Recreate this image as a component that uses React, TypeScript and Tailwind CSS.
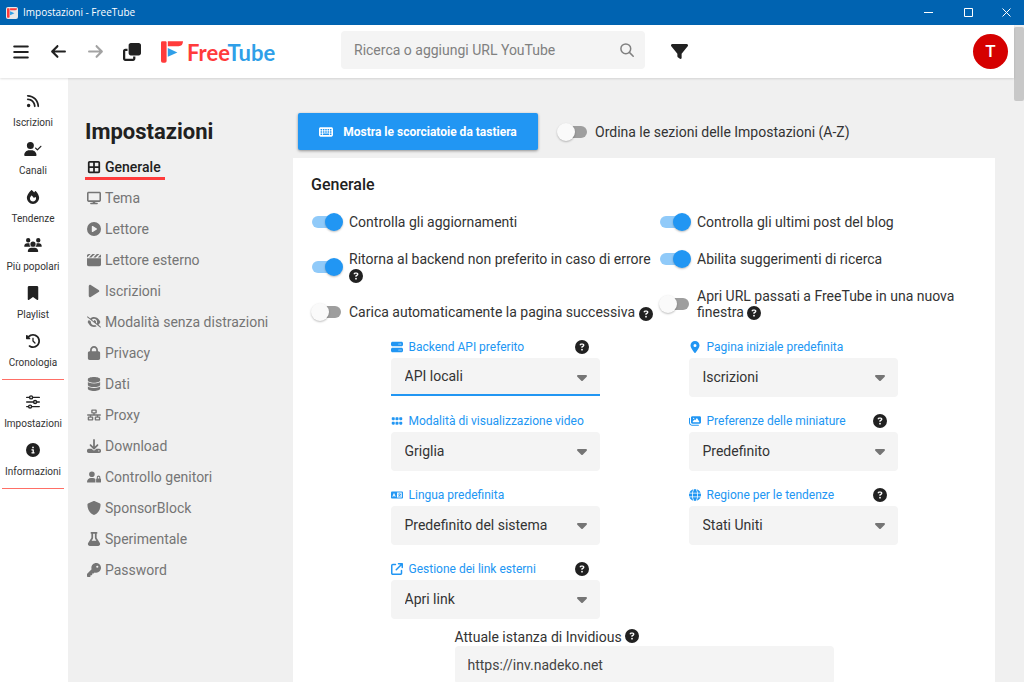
import { useState } from 'react';
import type { ReactNode } from 'react';
import type { IconType } from 'react-icons';
import {
  FaArrowLeft,
  FaArrowRight,
  FaArrowUpRightFromSquare,
  FaBookmark,
  FaBorderAll,
  FaCaretDown,
  FaCircleInfo,
  FaCirclePlay,
  FaCircleQuestion,
  FaClapperboard,
  FaClockRotateLeft,
  FaClone,
  FaDatabase,
  FaDisplay,
  FaDownload,
  FaEyeSlash,
  FaFilter,
  FaFire,
  FaFlask,
  FaGlobe,
  FaGrip,
  FaImages,
  FaKey,
  FaKeyboard,
  FaLanguage,
  FaLocationDot,
  FaLock,
  FaNetworkWired,
  FaPlay,
  FaRss,
  FaServer,
  FaShield,
  FaUserCheck,
  FaUserLock,
  FaUsers,
} from 'react-icons/fa6';

type IconProps = { className?: string };
type NavEntry = { label: string; icon: IconType | ((props: IconProps) => ReactNode) };

function SlidersIcon({ className }: IconProps) {
  return (
    <svg viewBox="0 0 14 14" className={className} fill="none" stroke="currentColor" strokeWidth="1.4" strokeLinecap="round">
      <path d="M.7 2.4H3.4M6.8 2.4H13.3M.7 7H7.4M10.8 7H13.3M.7 11.6H2.4M5.8 11.6H13.3" />
      <circle cx="5.1" cy="2.4" r="1.5" />
      <circle cx="9.1" cy="7" r="1.5" />
      <circle cx="4.1" cy="11.6" r="1.5" />
    </svg>
  );
}

const mainNav: NavEntry[] = [
  { label: 'Iscrizioni', icon: FaRss },
  { label: 'Canali', icon: FaUserCheck },
  { label: 'Tendenze', icon: FaFire },
  { label: 'Più popolari', icon: FaUsers },
  { label: 'Playlist', icon: FaBookmark },
  { label: 'Cronologia', icon: FaClockRotateLeft },
];

const appNav: NavEntry[] = [
  { label: 'Impostazioni', icon: SlidersIcon },
  { label: 'Informazioni', icon: FaCircleInfo },
];

const sections: NavEntry[] = [
  { label: 'Generale', icon: FaBorderAll },
  { label: 'Tema', icon: FaDisplay },
  { label: 'Lettore', icon: FaCirclePlay },
  { label: 'Lettore esterno', icon: FaClapperboard },
  { label: 'Iscrizioni', icon: FaPlay },
  { label: 'Modalità senza distrazioni', icon: FaEyeSlash },
  { label: 'Privacy', icon: FaLock },
  { label: 'Dati', icon: FaDatabase },
  { label: 'Proxy', icon: FaNetworkWired },
  { label: 'Download', icon: FaDownload },
  { label: 'Controllo genitori', icon: FaUserLock },
  { label: 'SponsorBlock', icon: FaShield },
  { label: 'Sperimentale', icon: FaFlask },
  { label: 'Password', icon: FaKey },
];

function LogoMark({ className }: IconProps) {
  return (
    <svg viewBox="0 0 22 22" className={className} aria-hidden="true">
      <path d="M0 1.5Q0 .3 1.2 .3H4.4Q5.6 .3 5.6 1.5V20Q5.6 21.7 3.8 21.7H1.8Q0 21.7 0 20Z" fill="#ff3b3b" />
      <path d="M6.8 .3H22Q22 5.2 17.6 5.2H6.8Z" fill="#ff3b3b" />
      <path d="M6.8 7L16.4 11.4L6.8 15.8Z" fill="#2f9fe8" />
    </svg>
  );
}

function TitleBar() {
  return (
    <div className="flex h-[25px] shrink-0 items-center bg-[#0063b1] text-white">
      <span className="ml-1.5 flex size-3 items-center justify-center rounded-xs bg-[#e8e8e8]">
        <LogoMark className="size-2.5" />
      </span>
      <span className="ml-[5px] font-['Open_Sans',sans-serif] text-[10px]">Impostazioni - FreeTube</span>
      <div className="ml-auto flex h-full">
        <button type="button" aria-label="Riduci a icona" className="flex w-10 items-center justify-center">
          <svg viewBox="0 0 9 9" className="size-[9px]"><path d="M0 4.5H9" stroke="currentColor" /></svg>
        </button>
        <button type="button" aria-label="Ingrandisci" className="flex w-10 items-center justify-center">
          <svg viewBox="0 0 9 9" className="size-[9px]"><path d="M.5 .5H8.5V8.5H.5Z" fill="none" stroke="currentColor" /></svg>
        </button>
        <button type="button" aria-label="Chiudi" className="flex w-9 items-center justify-center">
          <svg viewBox="0 0 9 9" className="size-[9px]"><path d="M.5 .5L8.5 8.5M8.5 .5L.5 8.5" stroke="currentColor" /></svg>
        </button>
      </div>
    </div>
  );
}

function TopBar() {
  return (
    <header className="z-10 flex h-[53px] shrink-0 items-center bg-white shadow-[0_1px_2px_rgba(0,0,0,0.12)]">
      <div className="flex w-[341px] shrink-0 items-center pl-3">
        <button type="button" aria-label="Menu" className="flex w-[18px] justify-center">
          <svg viewBox="0 0 16 14" className="h-3.5 w-4" stroke="currentColor" strokeWidth="2" strokeLinecap="round">
            <path d="M1.2 1.5H14.8M1.2 7H14.8M1.2 12.5H14.8" />
          </svg>
        </button>
        <button type="button" aria-label="Indietro" className="ml-[19px] flex w-[18px] justify-center"><FaArrowLeft className="size-[17px]" /></button>
        <button type="button" aria-label="Avanti" className="ml-[19px] flex w-[18px] justify-center text-[#a3a3a3]"><FaArrowRight className="size-[17px]" /></button>
        <button type="button" aria-label="Nuova finestra" className="ml-[19px] flex w-[18px] justify-center"><FaClone className="size-[18px]" /></button>
        <a href="#home" className="ml-5 flex items-center">
          <LogoMark className="size-[22px]" />
          <span className="ml-1 pt-0.5 font-['Lato',sans-serif] text-[22px] leading-6 font-bold text-[#ff3b3b]">
            Free<span className="text-[#2f9fe8]">Tube</span>
          </span>
        </a>
      </div>
      <form className="mb-[3px] flex h-[38px] w-[304px] items-center rounded bg-[#f4f4f4]" role="search">
        <input
          type="text"
          aria-label="Ricerca"
          placeholder="Ricerca o aggiungi URL YouTube"
          className="min-w-0 flex-1 bg-transparent pl-[13px] text-[14px] outline-none placeholder:text-[#808080]"
        />
        <button type="button" aria-label="Cerca" className="mr-[11px] text-[#808080]">
          <svg viewBox="0 0 14 14" className="size-3.5" fill="none" stroke="currentColor" strokeWidth="1.5" strokeLinecap="round">
            <circle cx="5.8" cy="5.8" r="4.9" />
            <path d="M9.4 9.4L13.2 13.2" />
          </svg>
        </button>
      </form>
      <button type="button" aria-label="Filtri" className="ml-[26px]"><FaFilter className="size-[17px]" /></button>
      <button type="button" className="mr-1.5 ml-auto flex size-[35px] items-center justify-center rounded-full bg-[#d50000] text-[17px] font-medium text-white">
        T
      </button>
    </header>
  );
}

function NavLink({ label, icon: Icon }: NavEntry) {
  return (
    <a href={`#${label}`} className="flex h-12 flex-col items-center justify-center gap-[9px]">
      <Icon className="h-3.5 w-[18px]" />
      <span className="text-[10px] leading-3 whitespace-nowrap text-[#333333]">{label}</span>
    </a>
  );
}

function SideNav() {
  return (
    <nav className="w-[68px] shrink-0 bg-white pt-[9px] pr-0.5">
      {mainNav.map((item) => <NavLink key={item.label} {...item} />)}
      <hr className="mx-0.5 mt-1 mb-2 h-px border-0 bg-[#ff6f66]" />
      {appNav.map((item) => <NavLink key={item.label} {...item} />)}
      <hr className="mx-0.5 mt-1 h-px border-0 bg-[#ff6f66]" />
    </nav>
  );
}

function SectionMenu() {
  const [active, setActive] = useState('Generale');

  return (
    <aside className="w-[225px] shrink-0 pt-10 pl-[17px]">
      <h1 className="text-[22px] leading-7 font-bold">Impostazioni</h1>
      <ul className="mt-[11px]">
        {sections.map(({ label, icon: Icon }) => (
          <li key={label} className="flex h-[31px] items-start">
            <a
              href={`#${label}`}
              onClick={() => setActive(label)}
              className={
                label === active
                  ? 'flex h-[23px] items-center gap-1 border-b-3 border-[#ff3b3b] pr-1 pl-0.5 text-[14px] font-medium'
                  : 'flex h-[23px] items-center gap-1 border-b-3 border-transparent pr-1 pl-0.5 text-[14px] text-[#757575]'
              }
            >
              <Icon className="size-3.5" />
              {label}
            </a>
          </li>
        ))}
      </ul>
    </aside>
  );
}

function Help() {
  return (
    <button type="button" aria-label="Aiuto" className="inline-block align-middle text-[#212121]">
      <FaCircleQuestion className="size-3.5" />
    </button>
  );
}

type ToggleProps = { children: ReactNode; on?: boolean; help?: boolean };

function Toggle({ children, on = false, help = false }: ToggleProps) {
  return (
    <div className="flex items-center py-2.5">
      <label className="flex items-center">
        <input type="checkbox" defaultChecked={on} className="peer sr-only" />
        <span className="relative mr-2 h-3 w-[29px] shrink-0 rounded-full bg-[#9e9e9e] before:absolute before:-top-[3px] before:-left-px before:size-[18px] before:rounded-full before:bg-[#fafafa] before:shadow-[0_1px_2px_rgba(0,0,0,0.25)] peer-checked:bg-[#90caf9] peer-checked:before:left-[13px] peer-checked:before:bg-[#2196f3]" />
        <span className="pt-px text-[14px] leading-4 text-[#333333]">
          {children}
          {help && <> <Help /></>}
        </span>
      </label>
    </div>
  );
}

type SelectFieldProps = {
  id: string;
  label: string;
  icon: IconType;
  options: string[];
  help?: boolean;
  focused?: boolean;
};

function SelectField({ id, label, icon: Icon, options, help = false, focused = false }: SelectFieldProps) {
  return (
    <div>
      <div className="flex h-[19px] items-center pb-0.5">
        <label htmlFor={id} className="flex items-center gap-1.5 text-[12px] leading-4 text-[#2196f3]">
          <Icon className="size-3" />
          {label}
        </label>
        {help && <span className="mr-[11px] ml-auto flex"><Help /></span>}
      </div>
      <div className="relative h-[39px]">
        <select
          id={id}
          className={
            focused
              ? 'h-[38px] w-full appearance-none rounded-t border-b-2 border-[#2196f3] bg-[#f4f4f4] pt-0.5 pr-8 pl-3.5 text-[14px] text-[#333333] outline-none'
              : 'h-[39px] w-full appearance-none rounded bg-[#f4f4f4] pr-8 pl-3.5 text-[14px] text-[#333333] outline-none'
          }
        >
          {options.map((option) => <option key={option}>{option}</option>)}
        </select>
        <FaCaretDown className="pointer-events-none absolute top-[11px] right-2.5 size-4 text-[#757575]" />
      </div>
    </div>
  );
}

function GeneralSettings() {
  return (
    <section className="mr-[19px] flex-1 bg-white px-[18px] pt-[18px]">
      <h2 className="text-[16px] leading-[18px] font-medium">Generale</h2>
      <div className="mt-[9px] grid grid-cols-[348px_1fr]">
        <div className="pl-px">
          <Toggle on>Controlla gli aggiornamenti</Toggle>
          <Toggle on help>Ritorna al backend non preferito in caso di errore</Toggle>
          <Toggle help>Carica automaticamente la pagina successiva</Toggle>
        </div>
        <div className="pr-4 pl-px">
          <Toggle on>Controlla gli ultimi post del blog</Toggle>
          <Toggle on>Abilita suggerimenti di ricerca</Toggle>
          <Toggle help>Apri URL passati a FreeTube in una nuova finestra</Toggle>
        </div>
      </div>
      <div className="mt-2 grid grid-cols-[209px_209px] justify-center gap-x-[89px] gap-y-4">
        <SelectField id="backend" label="Backend API preferito" icon={FaServer} options={['API locali', 'API Invidious']} help focused />
        <SelectField id="landing" label="Pagina iniziale predefinita" icon={FaLocationDot} options={['Iscrizioni', 'Tendenze']} />
        <SelectField id="view" label="Modalità di visualizzazione video" icon={FaGrip} options={['Griglia', 'Elenco']} />
        <SelectField id="thumbnails" label="Preferenze delle miniature" icon={FaImages} options={['Predefinito', 'Inizio']} help />
        <SelectField id="language" label="Lingua predefinita" icon={FaLanguage} options={['Predefinito del sistema', 'Italiano']} />
        <SelectField id="region" label="Regione per le tendenze" icon={FaGlobe} options={['Stati Uniti', 'Italia']} help />
        <SelectField id="links" label="Gestione dei link esterni" icon={FaArrowUpRightFromSquare} options={['Apri link', 'Chiedi prima']} help />
      </div>
      <div className="mx-auto mt-2.5 w-[379px] pb-6">
        <div className="flex h-[17px] items-start gap-[3px] text-[14px] leading-4 text-[#333333]">
          <label htmlFor="instance">Attuale istanza di Invidious</label>
          <Help />
        </div>
        <input
          id="instance"
          type="text"
          defaultValue="https://inv.nadeko.net"
          className="h-[38px] w-full rounded bg-[#f4f4f4] px-[13px] text-[14px] text-[#444444] outline-none"
        />
      </div>
    </section>
  );
}

export default function App() {
  return (
    <div className="flex h-screen flex-col overflow-hidden bg-[#f0f0f0] font-['Roboto',sans-serif] text-[#212121]">
      <TitleBar />
      <div className="flex min-h-0 flex-1">
        <div className="flex min-w-0 flex-1 flex-col">
          <TopBar />
          <div className="flex min-h-0 flex-1">
            <SideNav />
            <SectionMenu />
            <main className="flex min-w-0 flex-1 flex-col overflow-hidden pt-[35px]">
              <div className="mb-2 ml-[5px] flex h-[37px] shrink-0 items-center gap-5">
                <button
                  type="button"
                  className="flex h-[37px] w-60 items-center justify-center gap-2.5 rounded-xs bg-[#2196f3] text-[12px] font-bold text-white shadow-[0_1px_3px_rgba(0,0,0,0.4)]"
                >
                  <FaKeyboard className="size-3.5" />
                  Mostra le scorciatoie da tastiera
                </button>
                <Toggle>Ordina le sezioni delle Impostazioni (A-Z)</Toggle>
              </div>
              <GeneralSettings />
            </main>
          </div>
        </div>
        <div className="w-2.5 shrink-0 pt-0.5">
          <div className="h-[74px] rounded-xs bg-[#c8c8c8]" />
        </div>
      </div>
    </div>
  );
}
